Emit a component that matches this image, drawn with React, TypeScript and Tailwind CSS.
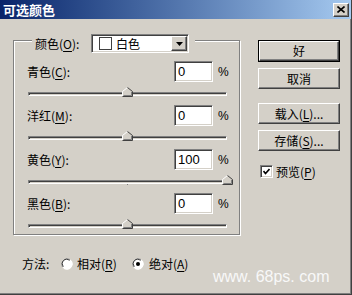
const cjk = "font-['Noto_Sans_CJK_SC','Liberation_Sans',sans-serif]";

function Mn({ children }: { children: string }) {
  return <span className="underline underline-offset-[2px]">{children}</span>;
}

function Thumb({ value }: { value: number }) {
  // value is -100..100, track is 199px wide
  const left = ((value + 100) / 200) * 199 - 5.5;
  return (
    <svg
      width="11"
      height="10"
      viewBox="0 0 11 10"
      className="absolute top-0"
      style={{ left }}
    >
      <polygon points="0.5,9.5 0.5,4.5 5.5,0.5 10.5,4.5 10.5,9.5" fill="#d4d0c8" />
      <polyline points="0.5,9 0.5,4.5 5.5,0.5" fill="none" stroke="#ffffff" />
      <polyline points="5.5,0.5 10.5,4.5 10.5,9.5 0.5,9.5" fill="none" stroke="#404040" />
      <polyline points="1.5,8.5 9.5,8.5 9.5,5" fill="none" stroke="#808080" />
    </svg>
  );
}

function SliderRow({
  label,
  mn,
  value,
  pos,
}: {
  label: string;
  mn: string;
  value: string;
  pos: number;
}) {
  return (
    <div className="mb-[7px]">
      <div className="flex h-[21px] items-center">
        <div className="w-[160px] pl-[13px]">
          {label}(<Mn>{mn}</Mn>):
        </div>
        <div className="flex h-[21px] w-[39px] items-center border border-b-white border-l-[#808080] border-r-white border-t-[#808080] bg-white pl-[3px] shadow-[inset_1px_1px_0_#404040,inset_-1px_-1px_0_#d4d0c8] font-['Liberation_Sans',sans-serif] text-[13px]">
          {value}
        </div>
        <div className="ml-[5px] font-['Liberation_Sans',sans-serif] text-[12px]">%</div>
      </div>
      <div className="relative ml-[14px] mt-[5px] h-[11px] w-[199px]">
        <div className="absolute left-0 right-0 top-[5px] h-[4px] border border-b-white border-l-[#808080] border-r-white border-t-[#808080] shadow-[inset_1px_1px_0_#404040]" />
        <div className="absolute left-[99px] top-[9px] h-[1px] w-[1px] bg-[#808080]" />
        <Thumb value={pos} />
      </div>
    </div>
  );
}

function Button({
  children,
  isDefault,
}: {
  children: React.ReactNode;
  isDefault?: boolean;
}) {
  if (isDefault) {
    return (
      <div className="h-[22px] w-[82px] border border-black">
        <div className="flex h-full w-full items-center justify-center border border-b-[#404040] border-l-white border-r-[#404040] border-t-white shadow-[inset_-1px_-1px_0_#808080]">
          {children}
        </div>
      </div>
    );
  }
  return (
    <div className="flex h-[21px] w-[82px] items-center justify-center border border-b-[#404040] border-l-white border-r-[#404040] border-t-white shadow-[inset_-1px_-1px_0_#808080]">
      {children}
    </div>
  );
}

function Radio({ checked }: { checked?: boolean }) {
  return (
    <svg width="12" height="12" viewBox="0 0 12 12">
      <circle cx="6" cy="6" r="5.5" fill="#ffffff" />
      <path d="M1.5 9 A5.5 5.5 0 0 1 9 1.5" fill="none" stroke="#808080" />
      <path d="M2.5 8.5 A4.2 4.2 0 0 1 8.5 2.5" fill="none" stroke="#404040" />
      <path d="M10.5 3 A5.5 5.5 0 0 1 3 10.5" fill="none" stroke="#ffffff" />
      {checked && <circle cx="6" cy="6" r="2" fill="#000000" />}
    </svg>
  );
}

export default function App() {
  return (
    <div
      className={`relative h-[295px] w-[352px] border-b border-r border-[#404040] bg-[#d4d0c8] text-[12px] leading-none text-black shadow-[inset_-1px_-1px_0_#808080] ${cjk}`}
    >
      {/* title bar */}
      <div className="flex h-[19px] items-center justify-between bg-gradient-to-r from-[#0a246a] to-[#a6caf0] pl-[3px] pr-[2px]">
        <div className="text-[13px] font-bold text-white">可选颜色</div>
        <div className="flex h-[14px] w-[16px] items-center justify-center border border-b-[#404040] border-l-white border-r-[#404040] border-t-white bg-[#d4d0c8] shadow-[inset_-1px_-1px_0_#808080]">
          <svg width="8" height="7" viewBox="0 0 8 7">
            <path d="M0.5 0.5 L7.5 6.5 M7.5 0.5 L0.5 6.5" stroke="#000" strokeWidth="1.6" />
          </svg>
        </div>
      </div>

      <div className="flex">
        {/* left column */}
        <div className="flex flex-col pl-[13px] pt-[21px]">
          <div className="h-[195px] w-[227px] border border-[#808080] shadow-[inset_1px_1px_0_#ffffff,1px_1px_0_#ffffff]">
            <div className="-mt-[7px] ml-[18px] flex h-[19px] w-fit items-center bg-[#d4d0c8] pl-[3px] pr-[6px]">
              <div className="w-[56px]">
                颜色(<Mn>O</Mn>):
              </div>
              <div className="flex h-[19px] w-[98px] items-center border border-b-white border-l-[#808080] border-r-white border-t-[#808080] bg-white shadow-[inset_1px_1px_0_#404040,inset_-1px_-1px_0_#d4d0c8]">
                <div className="ml-[7px] h-[13px] w-[13px] border border-[#404040] bg-white" />
                <div className="ml-[4px] flex-1">白色</div>
                <div className="mr-[1px] flex h-[15px] w-[16px] items-center justify-center border border-b-[#404040] border-l-white border-r-[#404040] border-t-white bg-[#d4d0c8] shadow-[inset_-1px_-1px_0_#808080]">
                  <svg width="7" height="4" viewBox="0 0 7 4">
                    <polygon points="0,0 7,0 3.5,4" fill="#000" />
                  </svg>
                </div>
              </div>
            </div>
            <div className="mt-[8px]">
              <SliderRow label="青色" mn="C" value="0" pos={0} />
              <SliderRow label="洋红" mn="M" value="0" pos={0} />
              <SliderRow label="黄色" mn="Y" value="100" pos={100} />
              <SliderRow label="黑色" mn="B" value="0" pos={0} />
            </div>
          </div>

          <div className="ml-[9px] mt-[21px] flex h-[16px] items-center">
            <div className="w-[39px]">方法:</div>
            <Radio />
            <div className="ml-[4px] w-[55px]">
              相对(<Mn>R</Mn>)
            </div>
            <Radio checked />
            <div className="ml-[5px]">
              绝对(<Mn>A</Mn>)
            </div>
          </div>
        </div>

        {/* right column */}
        <div className="ml-[18px] flex flex-col pt-[21px]">
          <Button isDefault>好</Button>
          <div className="mt-[6px]">
            <Button>取消</Button>
          </div>
          <div className="mt-[14px]">
            <Button>
              载入(<Mn>L</Mn>)...
            </Button>
          </div>
          <div className="mt-[6px]">
            <Button>
              存储(<Mn>S</Mn>)...
            </Button>
          </div>
          <div className="ml-[2px] mt-[14px] flex h-[13px] items-center">
            <div className="flex h-[13px] w-[13px] items-center justify-center border border-b-white border-l-[#808080] border-r-white border-t-[#808080] bg-white shadow-[inset_1px_1px_0_#404040,inset_-1px_-1px_0_#d4d0c8]">
              <svg width="7" height="7" viewBox="0 0 7 7">
                <path d="M0.5 3 L2.5 5.5 L6.5 1" fill="none" stroke="#000" strokeWidth="1.6" />
              </svg>
            </div>
            <div className="ml-[3px]">
              预览(<Mn>P</Mn>)
            </div>
          </div>
        </div>
      </div>

      {/* watermark */}
      <div className="absolute left-[213px] top-[268px] font-['Liberation_Sans',sans-serif] text-[16px] leading-[18px] text-[#f8f8f8]">
        www. 68ps. com
      </div>
    </div>
  );
}
